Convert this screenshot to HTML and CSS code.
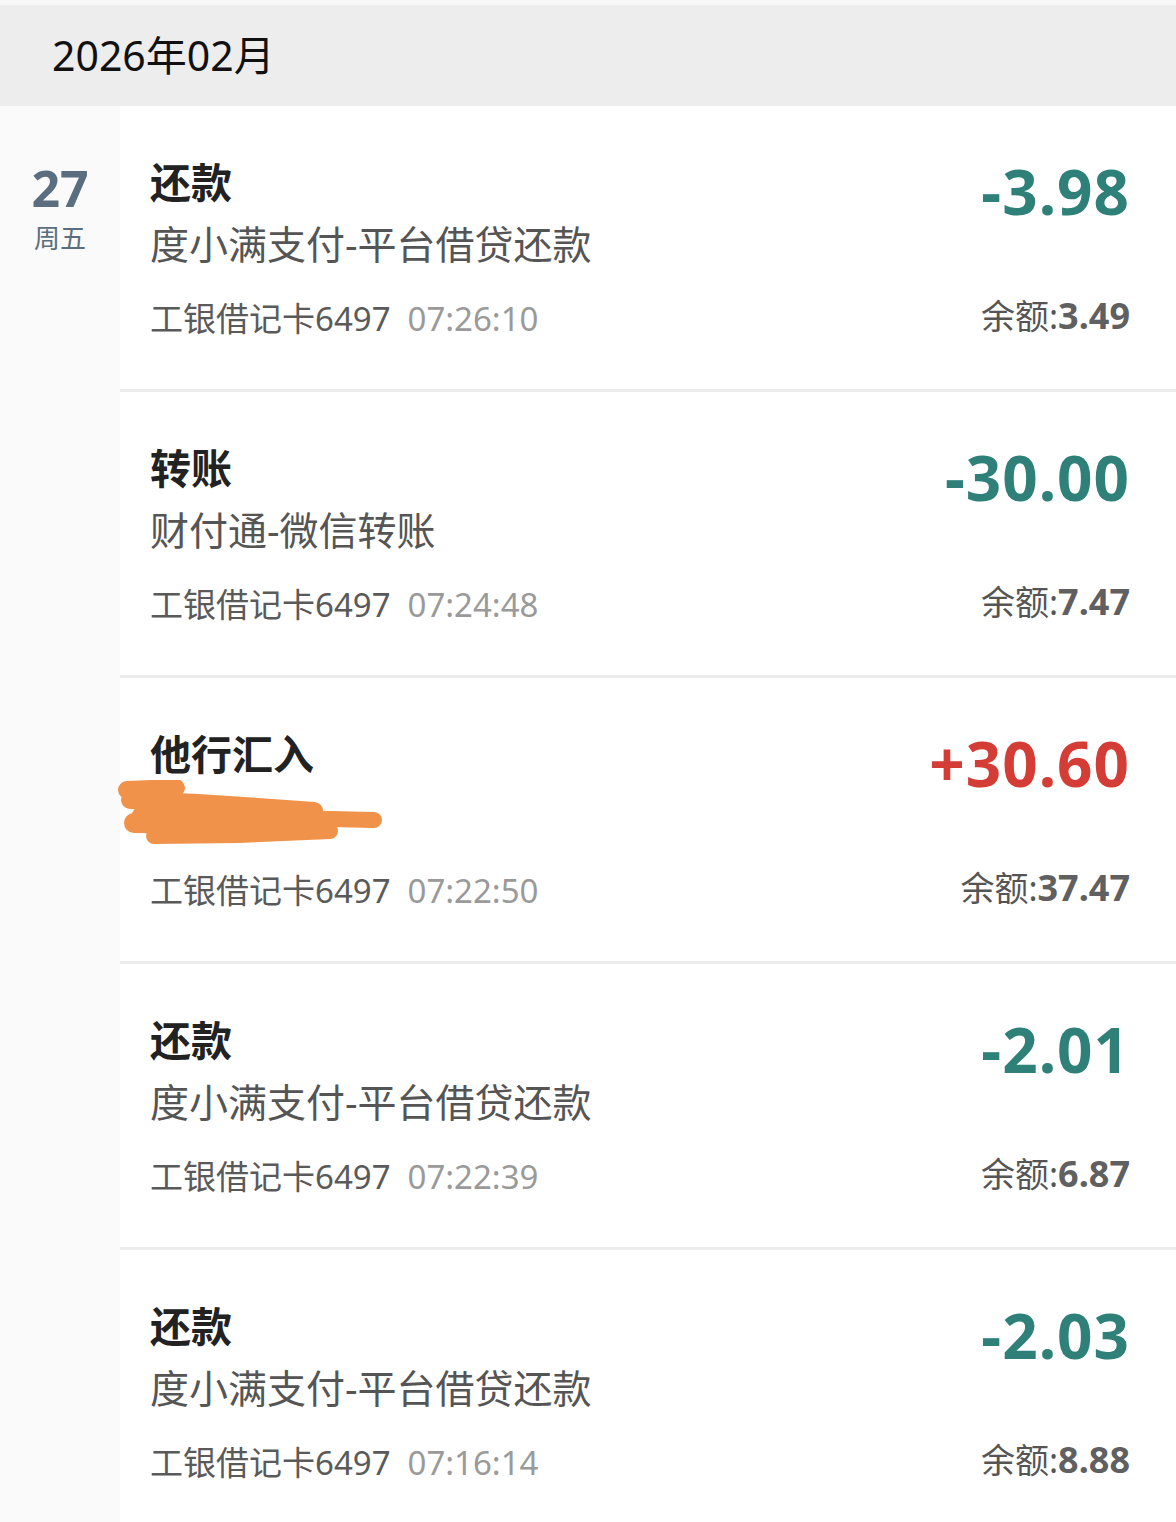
FILE: index.html
```html
<!DOCTYPE html>
<html lang="zh-CN">
<head>
    <meta charset="UTF-8">
    <meta name="viewport" content="width=device-width, initial-scale=1.0">
    <title>交易明细</title>
    <link rel="stylesheet" href="styles.css">
</head>
<body>
    <!-- Cabecera del mes -->
    <div class="month">2026年02月</div>

    <div class="day">
        <!-- Columna de la fecha -->
        <div class="day-side">
            <div class="day-num">27</div>
            <div class="day-week">周五</div>
        </div>

        <!-- Lista de movimientos -->
        <div class="day-list">
            <div class="item">
                <div class="item-info">
                    <div class="item-title">还款</div>
                    <div class="item-sub">度小满支付-平台借贷还款</div>
                    <div class="item-meta">工银借记卡6497<span class="item-time">07:26:10</span></div>
                </div>
                <div class="item-money">
                    <div class="amount out">-3.98</div>
                    <div class="balance">余额:<b>3.49</b></div>
                </div>
            </div>

            <div class="item">
                <div class="item-info">
                    <div class="item-title">转账</div>
                    <div class="item-sub">财付通-微信转账</div>
                    <div class="item-meta">工银借记卡6497<span class="item-time">07:24:48</span></div>
                </div>
                <div class="item-money">
                    <div class="amount out">-30.00</div>
                    <div class="balance">余额:<b>7.47</b></div>
                </div>
            </div>

            <div class="item">
                <div class="item-info">
                    <div class="item-title">他行汇入</div>
                    <div class="item-sub hidden-sub">
                        <!-- Tachado naranja encima del remitente -->
                        <svg class="scribble" width="270" height="70" viewBox="0 0 270 70">
                            <g fill="none" stroke="#f0924a" stroke-linecap="round" stroke-linejoin="round">
                                <path d="M9 10 L58 8" stroke-width="18"/>
                                <path d="M12 20 L80 23 L140 27 L196 31" stroke-width="18"/>
                                <path d="M16 43 L160 45" stroke-width="20"/>
                                <path d="M22 35 L120 37 L256 40" stroke-width="16"/>
                                <path d="M36 56 L120 55 L212 51" stroke-width="16"/>
                            </g>
                        </svg>
                    </div>
                    <div class="item-meta">工银借记卡6497<span class="item-time">07:22:50</span></div>
                </div>
                <div class="item-money">
                    <div class="amount in">+30.60</div>
                    <div class="balance">余额:<b>37.47</b></div>
                </div>
            </div>

            <div class="item">
                <div class="item-info">
                    <div class="item-title">还款</div>
                    <div class="item-sub">度小满支付-平台借贷还款</div>
                    <div class="item-meta">工银借记卡6497<span class="item-time">07:22:39</span></div>
                </div>
                <div class="item-money">
                    <div class="amount out">-2.01</div>
                    <div class="balance">余额:<b>6.87</b></div>
                </div>
            </div>

            <div class="item">
                <div class="item-info">
                    <div class="item-title">还款</div>
                    <div class="item-sub">度小满支付-平台借贷还款</div>
                    <div class="item-meta">工银借记卡6497<span class="item-time">07:16:14</span></div>
                </div>
                <div class="item-money">
                    <div class="amount out">-2.03</div>
                    <div class="balance">余额:<b>8.88</b></div>
                </div>
            </div>
        </div>
    </div>
</body>
</html>
```

FILE: styles.css
```css
/* Estilos generales */
body {
    font-family: "Noto Sans", "Noto Sans CJK SC", sans-serif;
    margin: 0;
    padding: 0;
    background-color: white;
    overflow: hidden;
}

/* Cabecera del mes */
.month {
    border-top: 5px solid #f8f8f8;
    background-color: #ededed;
    height: 101px;
    line-height: 101px;
    padding-left: 52px;
    font-size: 41px;
    color: #111;
}

/* Bloque del dia */
.day {
    display: flex;
}

.day-side {
    width: 120px;
    flex-shrink: 0;
    background-color: #fafafa;
    text-align: center;
    padding-top: 56px;
    color: #5b6e80;
}

.day-num {
    font-size: 50px;
    font-weight: bold;
    line-height: 52px;
}

.day-week {
    font-size: 26px;
    line-height: 36px;
    margin-top: 6px;
}

.day-list {
    flex: 1;
}

/* Cada movimiento */
.item {
    display: flex;
    justify-content: space-between;
    height: 283px;
    border-bottom: 3px solid #ececec;
    padding: 0 46px 0 30px;
    box-sizing: content-box;
}

.item-info {
    padding-top: 50px;
}

.item-title {
    font-size: 41px;
    font-weight: bold;
    line-height: 52px;
    color: #222;
}

.item-sub {
    font-size: 39px;
    line-height: 72px;
    color: #555;
}

.hidden-sub {
    position: relative;
    height: 72px;
}

.scribble {
    position: absolute;
    left: -32px;
    top: 0;
}

.item-meta {
    margin-top: 17px;
    font-size: 33px;
    line-height: 44px;
    color: #5a5a5a;
}

.item-time {
    margin-left: 17px;
    color: #9a9a9a;
}

.item-money {
    text-align: right;
    padding-top: 45px;
}

.amount {
    font-size: 62px;
    font-weight: bold;
    line-height: 80px;
    letter-spacing: 1px;
}

.amount.out {
    color: #2f8078;
}

.amount.in {
    color: #d43d35;
}

.balance {
    margin-top: 63px;
    font-size: 34px;
    line-height: 44px;
    color: #555;
}

.balance b {
    font-size: 36px;
    color: #606060;
}
```
